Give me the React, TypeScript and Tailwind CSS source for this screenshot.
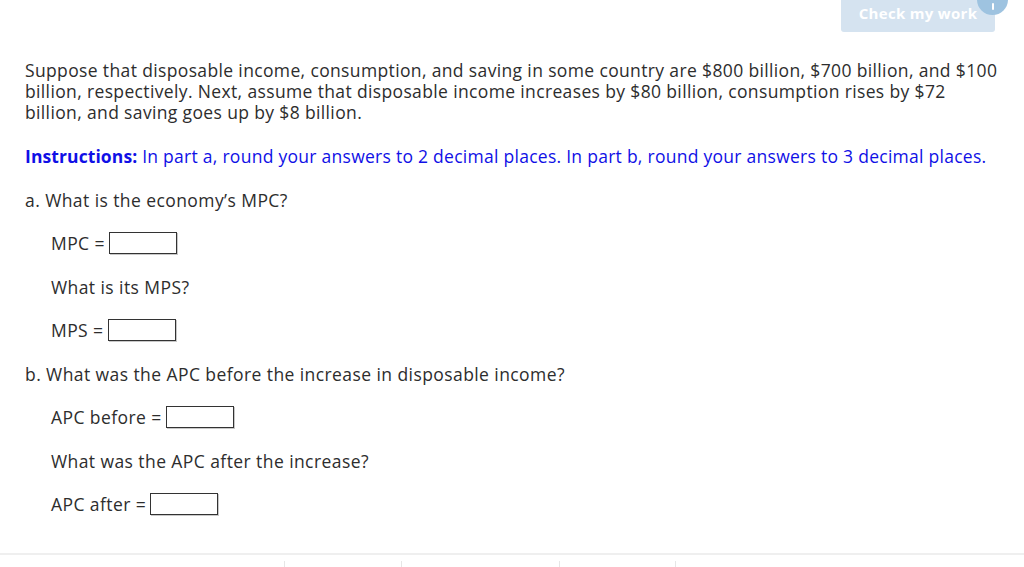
const Blank = ({ w }: { w: string }) => (
  <span
    className={`inline-block h-[22px] ${w} border border-[#333] bg-white shadow-[1px_1px_0_#c8c8c8] align-middle`}
  />
);

const Row = ({ label, w }: { label: string; w: string }) => (
  <div className="pl-[26px] flex items-center h-[22px] gap-[4px]">
    <span>{label}</span>
    <Blank w={w} />
  </div>
);

const intro = [
  "Suppose that disposable income, consumption, and saving in some country are $800 billion, $700 billion, and $100",
  "billion, respectively. Next, assume that disposable income increases by $80 billion, consumption rises by $72",
  "billion, and saving goes up by $8 billion.",
];

export default function App() {
  return (
    <div
      className="relative w-[1024px] h-[567px] overflow-hidden bg-white text-[#2d2d2d] text-[17.5px]"
      style={{ fontFamily: '"Open Sans", "Noto Sans", sans-serif' }}
    >
      <div className="relative h-[32px] flex justify-end pr-[29px]">
        <button className="w-[154px] h-[32px] bg-[#d5e3f0] rounded-b-[3px] text-white font-bold text-[15px] tracking-[0.3px] pb-[5px]">
          Check my work
        </button>
        <span className="absolute -top-[16px] right-[16px] w-[31px] h-[31px] rounded-full bg-[#9ec3e0] flex items-end justify-center pb-[5px]">
          <span className="block w-[2px] h-[7px] bg-white rounded-sm" />
        </span>
      </div>

      <div className="pl-[25px] pr-[15px] pt-[28px] tracking-[0.42px]">
        <div className="tracking-[0.36px]">
          {intro.map((line) => (
            <div key={line} className="h-[21px] leading-[21px] whitespace-nowrap">
              {line}
            </div>
          ))}
        </div>

        <div className="mt-[22px] flex flex-col gap-[21.5px] leading-[22px]">
          <p className="text-[#1010e6] tracking-[0.27px]">
            <span className="font-bold tracking-[0.1px]">Instructions:</span> In part a, round your answers to 2 decimal places. In part b,
            round your answers to 3 decimal places.
          </p>
          <p>a. What is the economy’s MPC?</p>
          <Row label="MPC =" w="w-[68px]" />
          <p className="pl-[26px]">What is its MPS?</p>
          <Row label="MPS =" w="w-[68px]" />
          <p>b. What was the APC before the increase in disposable income?</p>
          <Row label="APC before =" w="w-[68px]" />
          <p className="pl-[26px]">What was the APC after the increase?</p>
          <Row label="APC after =" w="w-[68px]" />
        </div>
      </div>

      <div className="absolute left-0 right-0 top-[553px] border-t-2 border-[#efefef] flex h-[14px] pt-[6px]">
        <div className="w-[284px]" />
        <div className="w-[117px] border-l border-[#e6e6e6]" />
        <div className="w-[158px] border-l border-[#e6e6e6]" />
        <div className="w-[116px] border-l border-[#e6e6e6]" />
        <div className="flex-1 border-l border-[#e6e6e6]" />
      </div>
    </div>
  );
}
